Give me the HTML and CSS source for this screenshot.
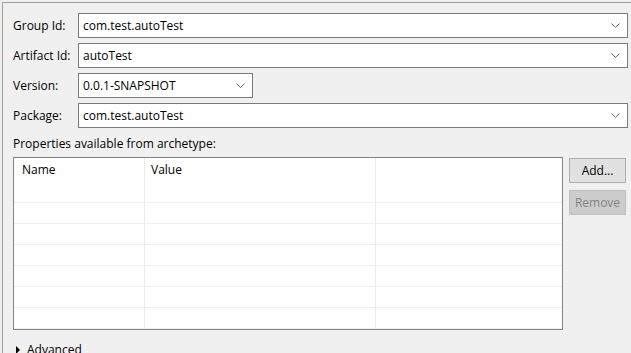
FILE: index.html
```html
<!DOCTYPE html>
<html>
  <head>
    <title>New Maven Project</title>
    <link rel="stylesheet" href="styles.css">
  </head>
  <body>
    <div class="frame">
      <div class="form-grid">
        <label class="form-label" for="group-id">Group Id:</label>
        <div class="combo">
          <span class="combo-text" id="group-id">com.test.autoTest</span>
          <svg class="chevron" width="9" height="5" viewBox="0 0 9 5"><path d="M0.5 0.5 L4.5 4.5 L8.5 0.5" fill="none" stroke="#707070" stroke-width="1"/></svg>
        </div>

        <label class="form-label" for="artifact-id">Artifact Id:</label>
        <div class="combo">
          <span class="combo-text" id="artifact-id">autoTest</span>
          <svg class="chevron" width="9" height="5" viewBox="0 0 9 5"><path d="M0.5 0.5 L4.5 4.5 L8.5 0.5" fill="none" stroke="#707070" stroke-width="1"/></svg>
        </div>

        <label class="form-label" for="version">Version:</label>
        <div class="combo combo-short">
          <span class="combo-text" id="version">0.0.1-SNAPSHOT</span>
          <svg class="chevron" width="9" height="5" viewBox="0 0 9 5"><path d="M0.5 0.5 L4.5 4.5 L8.5 0.5" fill="none" stroke="#707070" stroke-width="1"/></svg>
        </div>

        <label class="form-label" for="package">Package:</label>
        <div class="combo">
          <span class="combo-text" id="package">com.test.autoTest</span>
          <svg class="chevron" width="9" height="5" viewBox="0 0 9 5"><path d="M0.5 0.5 L4.5 4.5 L8.5 0.5" fill="none" stroke="#707070" stroke-width="1"/></svg>
        </div>
      </div>

      <div class="section-title">Properties available from archetype:</div>

      <div class="props">
        <div class="props-table">
          <div class="props-row props-head">
            <div class="cell cell-name">Name</div>
            <div class="cell cell-value">Value</div>
            <div class="cell cell-rest"></div>
          </div>
          <div class="props-row"><div class="cell cell-name"></div><div class="cell cell-value"></div><div class="cell cell-rest"></div></div>
          <div class="props-row"><div class="cell cell-name"></div><div class="cell cell-value"></div><div class="cell cell-rest"></div></div>
          <div class="props-row"><div class="cell cell-name"></div><div class="cell cell-value"></div><div class="cell cell-rest"></div></div>
          <div class="props-row"><div class="cell cell-name"></div><div class="cell cell-value"></div><div class="cell cell-rest"></div></div>
          <div class="props-row"><div class="cell cell-name"></div><div class="cell cell-value"></div><div class="cell cell-rest"></div></div>
          <div class="props-row"><div class="cell cell-name"></div><div class="cell cell-value"></div><div class="cell cell-rest"></div></div>
          <div class="props-row props-last"><div class="cell cell-name"></div><div class="cell cell-value"></div><div class="cell cell-rest"></div></div>
        </div>
        <div class="props-buttons">
          <button class="btn">Add...</button>
          <button class="btn btn-disabled" disabled>Remove</button>
        </div>
      </div>

      <div class="advanced">
        <span class="twisty"></span>
        <span>Advanced</span>
      </div>
    </div>
  </body>
</html>
```

FILE: styles.css
```css
html, body {
  margin: 0;
  padding: 0;
  height: 100%;
  overflow: hidden;
}

body {
  font-family: "Open Sans", "Noto Sans CJK SC", sans-serif;
  font-size: 12px;
  color: #000;
  background-color: #f0f0f0;
}

.frame {
  box-sizing: border-box;
  margin: 2px 0 0 2px;
  border-top: 1px solid #a0a0a0;
  border-left: 1px solid #a0a0a0;
  padding: 10px 3px 0 10px;
  height: calc(100% - 2px);
  overflow: hidden;
}

.form-grid {
  display: grid;
  grid-template-columns: 65px 1fr;
  row-gap: 5px;
  align-items: center;
}

.form-label {
  line-height: 25px;
}

.combo {
  display: flex;
  align-items: center;
  justify-content: space-between;
  height: 23px;
  background-color: #fff;
  border: 1px solid #7a7a7a;
  padding: 0 7px 0 4px;
}

.combo-short {
  width: 162px;
}

.combo-text {
  line-height: 23px;
}

.chevron {
  display: block;
}

.section-title {
  margin-top: 6px;
  line-height: 20px;
}

.props {
  display: flex;
  gap: 6px;
  margin-top: 3px;
}

.props-table {
  width: 548px;
  height: 171px;
  background-color: #fff;
  border: 1px solid #828282;
  overflow: hidden;
}

.props-row {
  display: flex;
  height: 20px;
  border-bottom: 1px solid #f0f0f0;
}

.props-head {
  height: 24px;
  border-bottom: none;
}

.cell {
  box-sizing: border-box;
  height: 100%;
  border-right: 1px solid #ebebeb;
}

.cell-name {
  width: 131px;
  padding-left: 8px;
}

.cell-value {
  width: 231px;
  padding-left: 6px;
}

.cell-rest {
  flex: 1;
  border-right: none;
}

.props-head .cell {
  line-height: 24px;
}

.props-buttons {
  display: flex;
  flex-direction: column;
  gap: 7px;
  padding-top: 1px;
}

.btn {
  width: 57px;
  height: 25px;
  padding: 0;
  font-family: inherit;
  font-size: 12px;
  color: #000;
  background-color: #e1e1e1;
  border: 1px solid #adadad;
}

.btn-disabled {
  color: #838383;
  background-color: #cccccc;
  border-color: #bfbfbf;
}

.advanced {
  display: flex;
  align-items: center;
  gap: 7px;
  margin-top: 12px;
  padding-left: 3px;
  line-height: 16px;
}

.twisty {
  width: 0;
  height: 0;
  border-top: 4px solid transparent;
  border-bottom: 4px solid transparent;
  border-left: 4px solid #000;
}
```
